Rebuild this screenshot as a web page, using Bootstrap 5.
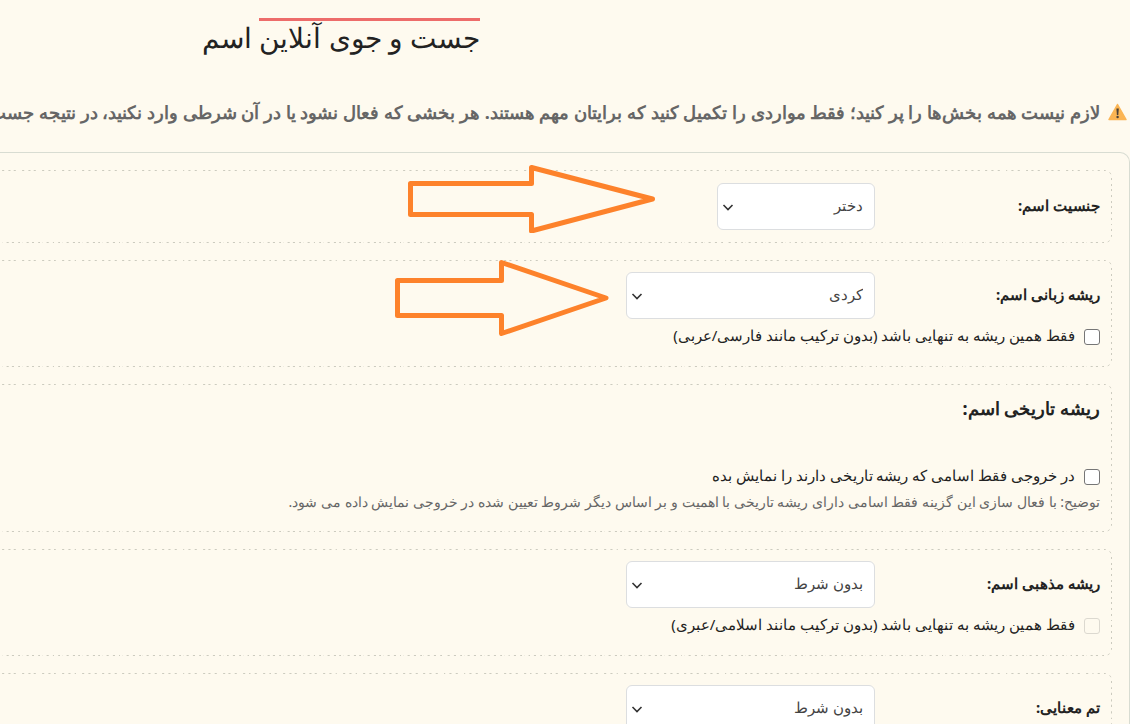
<!DOCTYPE html>
<html lang="fa" dir="rtl">
<head>
<meta charset="utf-8">
<meta name="viewport" content="width=device-width, initial-scale=1">
<title>جست و جوی آنلاین اسم</title>
<link rel="stylesheet" href="https://cdn.jsdelivr.net/npm/bootstrap@5.3.0/dist/css/bootstrap.min.css">
<style>
  body { background: #fefaef; color: #222; font-family: "Noto Sans", sans-serif; font-size: 15px; line-height: 24px; overflow-x: hidden; scrollbar-width: none; }
  body::-webkit-scrollbar { display: none; }
  .page-title { font-size: 28px; line-height: 32px; font-weight: 400; padding: 18px 0 6px; margin-right: 57.5%; }
  .page-title span { display: inline-block; border-top: 3px solid #ed6c6a; }
  .notice { font-size: 18px; line-height: 28px; font-weight: 700; color: #666; margin: 39px 3px 26px 0; gap: 8px; overflow: hidden; }
  .notice svg { flex: none; }
  .search-form { border: 1px solid #d8dcd2; border-left: 0; border-radius: 0 10px 0 0; padding: 17px 17px 0 0; }
  .field-box { border: 1px dashed #d3d2c6; border-left: 0; padding: 12px 11px; margin-bottom: 17px;
    border-image: url("data:image/svg+xml,%3csvg xmlns='http://www.w3.org/2000/svg' width='28' height='28' viewBox='0 0 28 28'%3e%3cpath fill='none' stroke='%23cccbbf' stroke-dasharray='2 4' d='M2 .5H21A6.500 6.500 0 0 1 27.500 7V21A6.500 6.500 0 0 1 21 27.500H2'/%3e%3c/svg%3e") 8 8 8 0 / 8px 8px 8px 0 / 0 round; }
  .field-box.compact { padding-top: 11px; padding-bottom: 17px; }
  .field-name { width: 225px; flex: none; font-weight: 700; padding-bottom: 4px; }
  .field-box .form-select { width: 249px; height: 47px; font-size: 15px; line-height: 24px; color: #444; background-color: #fff; border-color: #dcdee0; border-radius: 6px; padding: 8px 11px 12px 36px; background-position: left 4px center; background-size: 12px 12px;
    background-image: url("data:image/svg+xml,%3csvg xmlns='http://www.w3.org/2000/svg' viewBox='0 0 12 12'%3e%3cpath fill='none' stroke='%23333' stroke-width='1.6' d='M1.500 4l4.500 4.500L10.500 4'/%3e%3c/svg%3e"); }
  .field-box .form-select.narrow { width: 158px; }
  .tick-row { display: flex; align-items: center; gap: 9px; height: 26px; margin-top: 4px; }
  .tick-row .form-check-input { width: 16px; height: 16px; margin: 2px 0 0; float: none; border: 1px solid #767676; border-radius: 3px; flex: none; }
  .tick-row .form-check-input:disabled { border-color: #dcd9d0; background: transparent; opacity: 1; }
  .tick-row .form-check-label { opacity: 1 !important; padding-bottom: 2px; }
  .box-heading { font-size: 18px; line-height: 24px; font-weight: 700; margin-bottom: 43px; }
  .hint { font-size: 14px; line-height: 25px; color: #666; }
  .pointer-arrow { position: absolute; pointer-events: none; fill: none; stroke: #fd822b; stroke-width: 5; stroke-linejoin: round; }
  .arrow-gender { right: 454px; top: -7px; }
  .arrow-origin { right: 502px; top: -2px; }
</style>
</head>
<body>
<main>
  <h1 class="page-title mb-0 text-nowrap"><span>جست و جوی آنلاین</span> اسم</h1>

  <p class="notice d-flex align-items-center text-nowrap">
    <svg width="19" height="18" viewBox="0 0 19 18" aria-hidden="true"><path d="M9.5 1.5L18 16.5H1z" fill="#fbb554" stroke="#fbb554" stroke-width="1.5" stroke-linejoin="round"/><path d="M8.4 5.5h2.4l-.5 6.5H8.9z" fill="#4c4136"/><circle cx="9.6" cy="14" r="1.2" fill="#4c4136"/></svg>
    <span>لازم نیست همه بخش‌ها را پر کنید؛ فقط مواردی را تکمیل کنید که برایتان مهم هستند. هر بخشی که فعال نشود یا در آن شرطی وارد نکنید، در نتیجه جست و جو</span>
  </p>

  <form class="search-form">
    <section class="field-box position-relative">
      <div class="d-flex align-items-center">
        <label class="field-name" for="gender">جنسیت اسم:</label>
        <select class="form-select narrow" id="gender"><option>دختر</option><option>پسر</option></select>
      </div>
      <svg class="pointer-arrow arrow-gender" width="252" height="69" viewBox="405 164 252 69" aria-hidden="true"><path d="M410.500 183.500H531.500V167.500L652.500 199L531.500 231V214.500H410.500z"/></svg>
    </section>

    <section class="field-box compact position-relative">
      <div class="d-flex align-items-center">
        <label class="field-name" for="origin">ریشه زبانی اسم:</label>
        <select class="form-select" id="origin"><option>کردی</option><option>فارسی</option></select>
      </div>
      <div class="tick-row">
        <input class="form-check-input" type="checkbox" id="origin-only">
        <label class="form-check-label" for="origin-only">فقط همین ریشه به تنهایی باشد (بدون ترکیب مانند فارسی/عربی)</label>
      </div>
      <svg class="pointer-arrow arrow-origin" width="216" height="77" viewBox="393 259 216 77" aria-hidden="true"><path d="M397.500 280.500H501.500V262.500L606 298L501.500 333.500V315.500H397.500z"/></svg>
    </section>

    <section class="field-box compact">
      <h2 class="box-heading">ریشه تاریخی اسم:</h2>
      <div class="tick-row mt-0">
        <input class="form-check-input" type="checkbox" id="historic">
        <label class="form-check-label" for="historic">در خروجی فقط اسامی که ریشه تاریخی دارند را نمایش بده</label>
      </div>
      <div class="hint">توضیح: با فعال سازی این گزینه فقط اسامی دارای ریشه تاریخی با اهمیت و بر اساس دیگر شروط تعیین شده در خروجی نمایش داده می شود.</div>
    </section>

    <section class="field-box compact">
      <div class="d-flex align-items-center">
        <label class="field-name" for="religion">ریشه مذهبی اسم:</label>
        <select class="form-select" id="religion"><option>بدون شرط</option></select>
      </div>
      <div class="tick-row">
        <input class="form-check-input" type="checkbox" id="religion-only" disabled>
        <label class="form-check-label" for="religion-only">فقط همین ریشه به تنهایی باشد (بدون ترکیب مانند اسلامی/عبری)</label>
      </div>
    </section>

    <section class="field-box compact">
      <div class="d-flex align-items-center">
        <label class="field-name" for="theme">تم معنایی:</label>
        <select class="form-select" id="theme"><option>بدون شرط</option></select>
      </div>
    </section>
  </form>
</main>
<script src="https://cdn.jsdelivr.net/npm/bootstrap@5.3.0/dist/js/bootstrap.bundle.min.js"></script>
</body>
</html>
